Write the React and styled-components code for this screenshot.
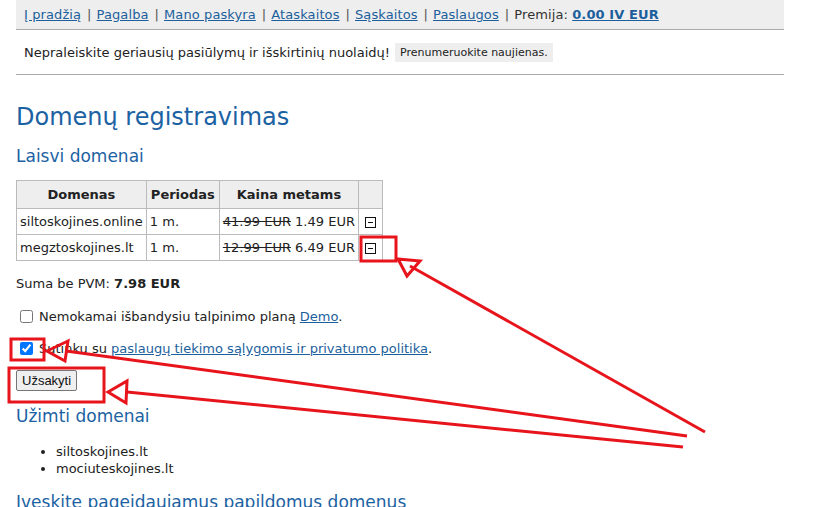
import React from 'react';
import styled, { createGlobalStyle } from 'styled-components';

const GlobalStyle = createGlobalStyle`
  html, body {
    margin: 0;
    padding: 0;
    background: #ffffff;
  }
  body {
    font-family: "DejaVu Sans", Verdana, sans-serif;
    font-size: 13px;
    color: #222;
  }
`;

// page shell
const Page = styled.div`
  position: relative;
  width: 818px;
  height: 507px;
  overflow: hidden;
  padding: 0 34px 0 16px;
  box-sizing: border-box;
`;

const NavBar = styled.div`
  height: 30px;
  box-sizing: border-box;
  background: #eeeeee;
  border-bottom: 1px solid #aaaaaa;
  padding: 0 8px;
  display: flex;
  align-items: center;
  color: #333;
  white-space: nowrap;
  letter-spacing: 0.1px;
`;

const NavLink = styled.a`
  color: #1c5f9c;
  text-decoration: underline;
  font-weight: ${p => (p.$bold ? 'bold' : 'normal')};
`;

const Sep = styled.span`
  color: #555;
  margin: 0 5px 0 6px;
`;

const PromoRow = styled.div`
  height: 45px;
  box-sizing: border-box;
  border-bottom: 1px solid #aaaaaa;
  padding: 0 8px;
  display: flex;
  align-items: center;
  gap: 5px;
`;

const PromoButton = styled.span`
  background: #eeeeee;
  font-size: 11px;
  padding: 3px 5px;
`;

const Title = styled.h1`
  font-size: 24px;
  font-weight: normal;
  color: #1c62a3;
  margin: 27px 0 0;
  line-height: 30px;
`;

const Subtitle = styled.h2`
  font-size: 17px;
  font-weight: normal;
  color: #1c62a3;
  margin: ${p => p.$margin || '13px 0 0'};
  line-height: 22px;
  white-space: nowrap;
`;

const Table = styled.table`
  border-collapse: collapse;
  margin-top: 13px;
  border: 1px solid #bbbbbb;
`;

const Th = styled.th`
  background: #eeeeee;
  border: 1px solid #bbbbbb;
  font-weight: bold;
  height: 27px;
  padding: 0 4px;
  text-align: center;
`;

const Td = styled.td`
  border: 1px solid #bbbbbb;
  height: 25px;
  padding: 0 3px;
  white-space: nowrap;
`;

const Old = styled.span`
  text-decoration: line-through;
`;

const RemoveIcon = styled.span`
  display: inline-block;
  width: 9px;
  height: 9px;
  border: 1px solid #111;
  position: relative;
  vertical-align: middle;
  margin: 0 3px;
  &::after {
    content: '';
    position: absolute;
    left: 2px;
    right: 2px;
    top: 4px;
    height: 1px;
    background: #111;
  }
`;

const Sum = styled.p`
  margin: 15px 0 0;
`;

const CheckRow = styled.label`
  display: flex;
  align-items: center;
  gap: 6px;
  margin: ${p => p.$margin || '18px 0 0'};
  padding-left: 2px;
  a {
    color: #1c5f9c;
  }
`;

const Box = styled.input`
  width: 13px;
  height: 13px;
  margin: 0 0 0 2px;
`;

const OrderButton = styled.button`
  margin-top: 14px;
  font-family: "Liberation Sans", Arial, sans-serif;
  font-size: 13px;
  padding: 1px 5px;
  height: 21px;
  background: #efefef;
  border: 1px solid #767676;
  border-radius: 2px;
  color: #111;
`;

const List = styled.ul`
  margin: 16px 0 0;
  padding-left: 40px;
  line-height: 17px;
`;

const Overlay = styled.svg`
  position: absolute;
  left: 0;
  top: 0;
  pointer-events: none;
`;

const domains = [
  { name: 'siltoskojines.online', old: '41.99 EUR', price: '1.49 EUR' },
  { name: 'megztoskojines.lt', old: '12.99 EUR', price: '6.49 EUR' },
];

const Annotations = () => (
  <Overlay width="818" height="507" viewBox="0 0 818 507">
    <g fill="none" stroke="#e8141b" strokeWidth="3" strokeLinejoin="miter">
      <rect x="361" y="237" width="35" height="24" />
      <rect x="11" y="339" width="33" height="21" />
      <rect x="9" y="368" width="95" height="34" />
      {/* arrow to remove icon */}
      <line x1="705" y1="432" x2="410" y2="266" />
      <polygon points="398,259 420,261 407,276" />
      {/* arrow to checkbox */}
      <line x1="687" y1="436" x2="66" y2="351" />
      <polygon points="47,351 68,341 65,361" />
      {/* arrow to button */}
      <line x1="683" y1="447" x2="127" y2="392" />
      <polygon points="108,392 127,381 126,403" />
    </g>
  </Overlay>
);

export default function App() {
  return (
    <>
      <GlobalStyle />
      <Page>
        <NavBar>
          <NavLink href="#">Į pradžią</NavLink><Sep>|</Sep>
          <NavLink href="#">Pagalba</NavLink><Sep>|</Sep>
          <NavLink href="#">Mano paskyra</NavLink><Sep>|</Sep>
          <NavLink href="#">Ataskaitos</NavLink><Sep>|</Sep>
          <NavLink href="#">Sąskaitos</NavLink><Sep>|</Sep>
          <NavLink href="#">Paslaugos</NavLink><Sep>|</Sep>
          <span>Premija:&nbsp;</span>
          <NavLink href="#" $bold>0.00 IV EUR</NavLink>
        </NavBar>
        <PromoRow>
          <span>Nepraleiskite geriausių pasiūlymų ir išskirtinių nuolaidų!</span>
          <PromoButton>Prenumeruokite naujienas.</PromoButton>
        </PromoRow>

        <Title>Domenų registravimas</Title>
        <Subtitle>Laisvi domenai</Subtitle>

        <Table>
          <thead>
            <tr>
              <Th>Domenas</Th>
              <Th>Periodas</Th>
              <Th>Kaina metams</Th>
              <Th />
            </tr>
          </thead>
          <tbody>
            {domains.map(d => (
              <tr key={d.name}>
                <Td>{d.name}</Td>
                <Td>1 m.</Td>
                <Td><Old>{d.old}</Old> {d.price}</Td>
                <Td><RemoveIcon /></Td>
              </tr>
            ))}
          </tbody>
        </Table>

        <Sum>Suma be PVM: <b>7.98 EUR</b></Sum>

        <CheckRow>
          <Box type="checkbox" />
          <span>Nemokamai išbandysiu talpinimo planą <a href="#">Demo</a>.</span>
        </CheckRow>
        <CheckRow $margin="17px 0 0">
          <Box type="checkbox" defaultChecked />
          <span>Sutinku su <a href="#">paslaugų tiekimo sąlygomis ir privatumo politika</a>.</span>
        </CheckRow>
        <OrderButton>Užsakyti</OrderButton>

        <Subtitle $margin="14px 0 0">Užimti domenai</Subtitle>
        <List>
          <li>siltoskojines.lt</li>
          <li>mociuteskojines.lt</li>
        </List>
        <Subtitle $margin="14px 0 0">Įveskite pageidaujamus papildomus domenus</Subtitle>

        <Annotations />
      </Page>
    </>
  );
}
